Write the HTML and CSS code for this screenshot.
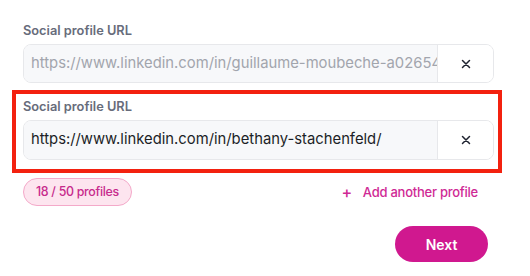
FILE: index.html
```html
<!DOCTYPE html>
<html lang="en">
<head>
<meta charset="utf-8">
<link rel="stylesheet" href="styles.css">
</head>
<body>
<div class="page">
  <div class="field">
    <label class="label">Social profile URL</label>
    <div class="input-row">
      <div class="input muted">https://www.linkedin.com/in/guillaume-moubeche-a026541</div>
      <button class="remove" aria-label="Remove">
        <svg width="10" height="10" viewBox="0 0 10 10"><path d="M1.5 1.5 L8.5 8.5 M8.5 1.5 L1.5 8.5" stroke="#1f2330" stroke-width="1.5" stroke-linecap="round"/></svg>
      </button>
    </div>
  </div>
  <div class="field highlight">
    <label class="label">Social profile URL</label>
    <div class="input-row">
      <div class="input">https://www.linkedin.com/in/bethany-stachenfeld/</div>
      <button class="remove" aria-label="Remove">
        <svg width="10" height="10" viewBox="0 0 10 10"><path d="M1.5 1.5 L8.5 8.5 M8.5 1.5 L1.5 8.5" stroke="#1f2330" stroke-width="1.5" stroke-linecap="round"/></svg>
      </button>
    </div>
  </div>
  <div class="meta-row">
    <span class="badge">18 / 50 profiles</span>
    <a class="add-link"><span class="plus">+</span>Add another profile</a>
  </div>
  <div class="actions">
    <button class="next">Next</button>
  </div>
</div>
</body>
</html>
```
FILE: styles.css
```css
* { box-sizing: border-box; }
html, body { margin: 0; padding: 0; background: #ffffff; }
body { font-family: Inter, "Noto Sans", sans-serif; }
.page {
  width: 530px;
  padding: 23px 36px 0 23px;
  display: flex;
  flex-direction: column;
}
.field { display: flex; flex-direction: column; }
.label {
  font-size: 12.8px;
  font-weight: 600;
  line-height: 16px;
  color: #676c7b;
  margin-bottom: 5px;
}
.input-row {
  display: flex;
  height: 39px;
  border: 1px solid #e7e8eb;
  border-radius: 8px;
  overflow: hidden;
}
.input {
  flex: 1;
  min-width: 0;
  background: #f7f8fa;
  font-size: 14.8px;
  line-height: 37px;
  padding-left: 7px;
  color: #1c1f27;
  white-space: nowrap;
  overflow: hidden;
}
.input.muted { color: #a2a5ad; }
.remove {
  width: 56px;
  flex: none;
  border: none;
  border-left: 1px solid #e7e8eb;
  background: #ffffff;
  display: flex;
  align-items: center;
  justify-content: center;
  padding: 0;
}
.highlight {
  margin: 7px -8px 0 -11px;
  border: 4px solid #f3210f;
  padding: 5px 4px 9px 7px;
}
.highlight .input-row { height: 40px; }
.meta-row {
  display: flex;
  justify-content: space-between;
  align-items: center;
  margin-top: 5px;
  padding-right: 16px;
}
.badge {
  height: 28px;
  padding: 0 12px;
  border: 1px solid #f4a9c9;
  background: #fde5ef;
  border-radius: 14px;
  color: #c72b8c;
  font-size: 12.4px;
  letter-spacing: -0.3px;
  font-weight: 500;
  line-height: 26px;
}
.add-link {
  color: #cf2a95;
  font-size: 13px;
  letter-spacing: -0.25px;
  font-weight: 500;
  display: flex;
  align-items: center;
}
.plus { font-size: 16px; margin-right: 11px; }
.actions {
  display: flex;
  justify-content: flex-end;
  margin-top: 20px;
  padding-right: 6px;
}
.next {
  width: 93px;
  height: 36px;
  border: none;
  border-radius: 18px;
  background: #d0188f;
  color: #ffffff;
  font-family: Inter, "Noto Sans", sans-serif;
  font-size: 14px;
  font-weight: 600;
}
```
